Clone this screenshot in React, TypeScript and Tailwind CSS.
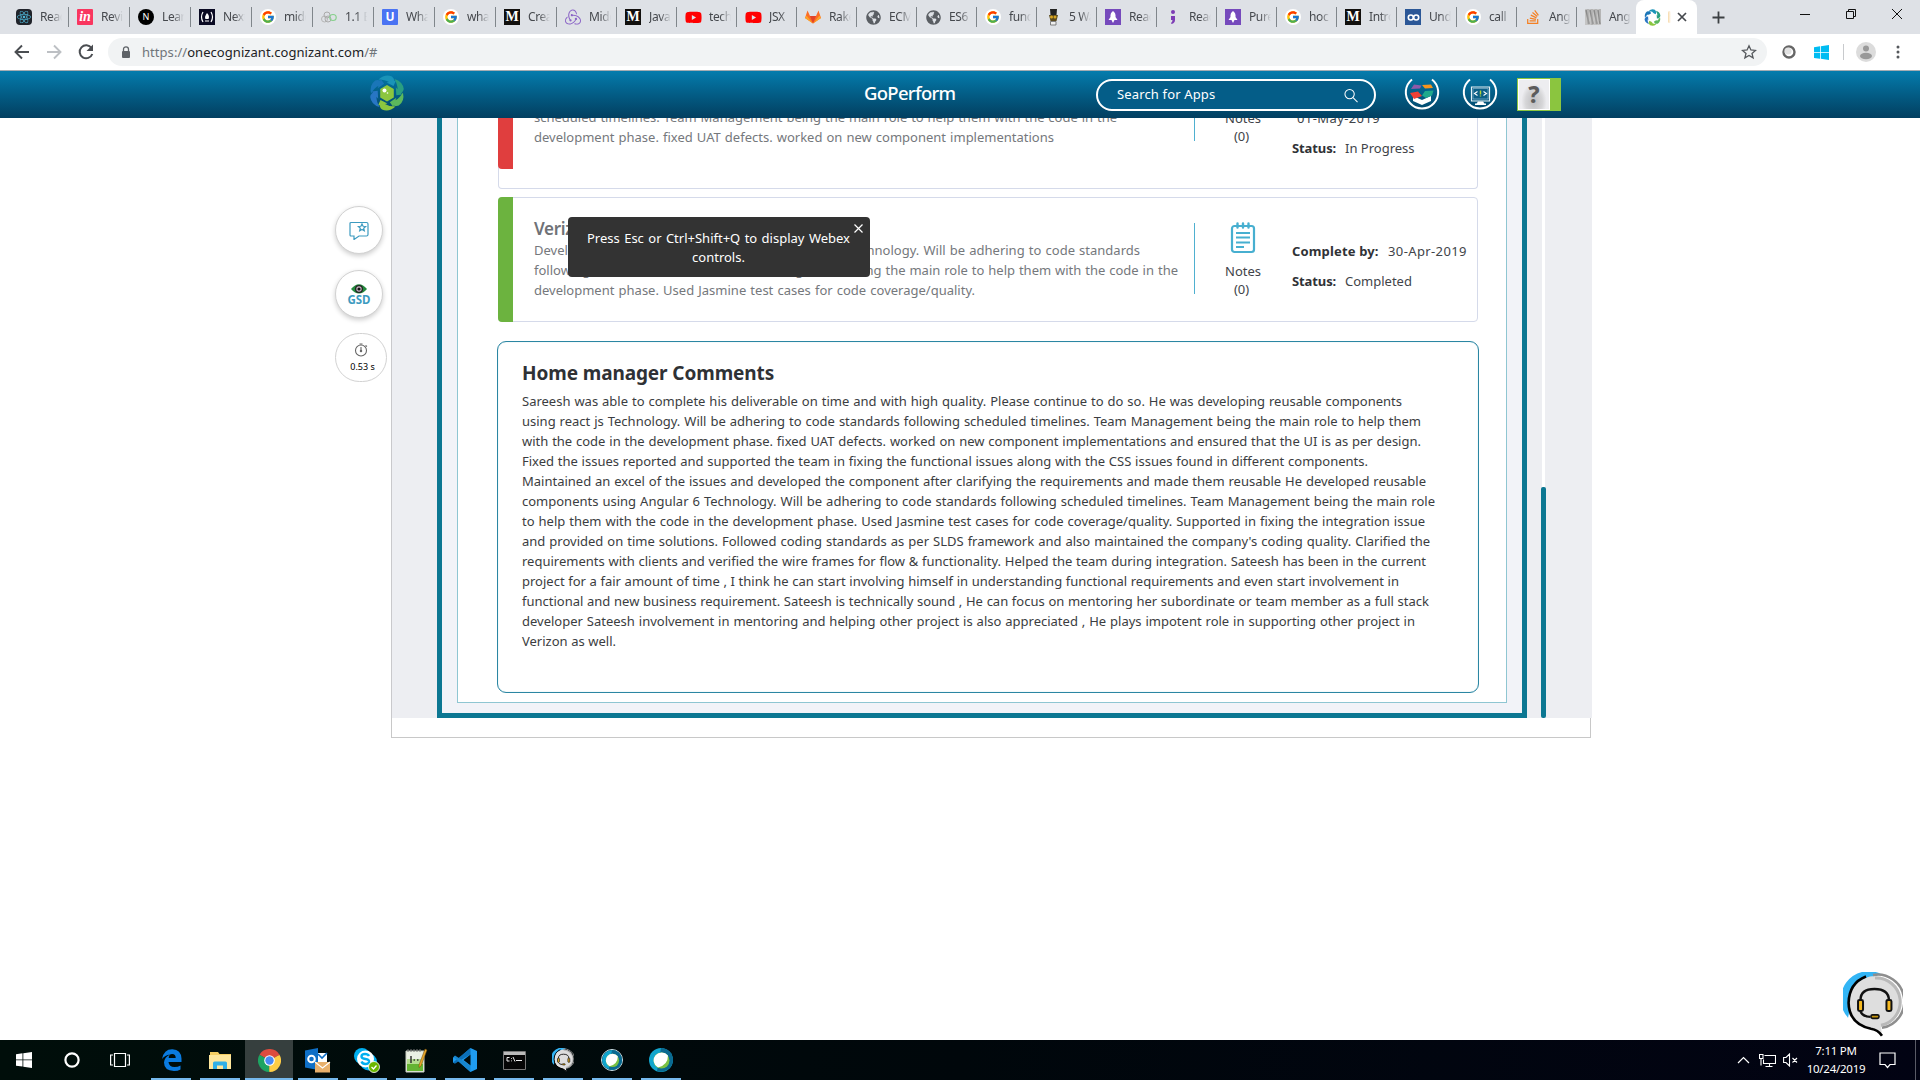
import React from "react";
import { FaReact, FaYoutube, FaStackOverflow, FaRocket, FaGlobeAmericas } from "react-icons/fa";
import { FcGoogle } from "react-icons/fc";
import { SiRedux } from "react-icons/si";

type Kind = string;

function Favicon({ kind }: { kind: Kind }) {
  switch (kind) {
    case "react":
      return (
        <span className="flex size-4 items-center justify-center rounded-sm bg-[#20232a]">
          <FaReact size={14} color="#4fb6d6" />
        </span>
      );
    case "in":
      return (
        <span className="flex size-4 items-center justify-center rounded-[1px] bg-[#f9365f] font-['Liberation_Serif'] text-[14px] leading-4 font-bold text-white italic">
          in
        </span>
      );
    case "next":
      return (
        <span className="flex size-4 items-center justify-center rounded-full bg-black text-[9px] leading-4 text-white">N</span>
      );
    case "fcc":
      return (
        <span className="flex size-4 items-center justify-center bg-[#0a0a23]">
          <svg width="14" height="12" viewBox="0 0 14 12" fill="none" stroke="#fff">
            <path d="M3 1Q0 6 3 11M11 1Q14 6 11 11M5 10h4" strokeWidth="1.2" />
            <path d="M7 2q3 3 1.500 6h-3q-1.500-2 1.500-6z" fill="#fff" stroke="none" />
          </svg>
        </span>
      );
    case "google":
      return (
        <span className="flex size-4 items-center justify-center rounded-full bg-white">
          <FcGoogle size={14} />
        </span>
      );
    case "saga":
      return (
        <svg width="16" height="12" viewBox="0 0 16 12" fill="none">
          <circle cx="6" cy="4" r="3" stroke="#aaa" />
          <circle cx="3.500" cy="8" r="3" stroke="#b5b5b5" />
          <circle cx="7" cy="8" r="3" stroke="#aaa" />
          <ellipse cx="12" cy="6.500" rx="3.200" ry="3" stroke="#86d08c" strokeWidth="1.200" />
        </svg>
      );
    case "u":
      return (
        <span className="flex size-4 items-center justify-center rounded-[1px] bg-[#4a73f3] text-[12px] leading-4 font-bold text-white">U</span>
      );
    case "m":
      return (
        <span className="flex size-4 items-center justify-center bg-[#12100e] font-['Liberation_Serif'] text-[14px] leading-4 font-bold text-white">M</span>
      );
    case "redux":
      return <SiRedux size={16} color="#8a63c6" />;
    case "youtube":
      return (
        <span className="relative flex size-4 items-center justify-center">
          <FaYoutube size={17} color="#f00" className="shrink-0" />
        </span>
      );
    case "gitlab":
      return (
        <svg width="16" height="16" viewBox="0 0 16 16">
          <path d="M8 14.500 0 9 2.500 1.500 5 7h6l2.500-5.500L16 9z" fill="#fc6d26" />
          <path d="M8 14.500 5 7h6z" fill="#e24329" />
          <path d="M0 9l1.500-2.500L8 14.500zM16 9l-1.500-2.500L8 14.500z" fill="#fca326" />
        </svg>
      );
    case "globe":
      return <FaGlobeAmericas size={15} color="#5a5e63" />;
    case "tux":
      return (
        <svg width="16" height="18" viewBox="0 0 16 18">
          <path d="M5 1h7l-.5 6h-6z" fill="#222" />
          <path d="M4 7h9l-1.500 6h-6z" fill="#5b4a1d" />
          <circle cx="6.500" cy="9" r="1.500" fill="#d9a520" />
          <circle cx="10" cy="9" r="1.500" fill="#d9a520" />
          <path d="M5.500 13.500h5.500v3.500h-5.500z" fill="#eee" stroke="#666" strokeWidth=".8" />
        </svg>
      );
    case "rocket":
      return (
        <span className="flex size-4 items-center justify-center bg-[#764abc]">
          <svg width="10" height="12" viewBox="0 0 10 12" fill="#fff">
            <path d="M5 0q3 2 2.500 6L9.500 9H6.500L5 12 3.500 9H.500l2-3Q2 2 5 0z" />
          </svg>
        </span>
      );
    case "semi":
      return (
        <svg width="16" height="16" viewBox="0 0 16 16" fill="#7d3cb5">
          <circle cx="8" cy="3" r="2" />
          <path d="M6 7h4v4q0 3-3.500 4l-.5-1q1.500-1 1.500-3H6z" />
        </svg>
      );
    case "oo":
      return (
        <span className="flex size-4 items-center justify-center bg-[#2b5797]">
          <svg width="13" height="7" viewBox="0 0 13 7" fill="none" stroke="#fff" strokeWidth="1.600">
            <circle cx="3.800" cy="3.500" r="2.500" />
            <circle cx="9.200" cy="3.500" r="2.500" />
          </svg>
        </span>
      );
    case "so":
      return <FaStackOverflow size={16} color="#f48024" />;
    case "wave":
      return (
        <svg width="16" height="16" viewBox="0 0 16 16" fill="none">
          <path d="M0 0h16v16H0z" fill="#c4c4c4" />
          <path d="M1 1l3 14M5 1l3 14M9 1l3 14M13 1l2 14" stroke="#8a8a8a" strokeWidth="1.500" />
          <path d="M3 0v15M7 0v16M11 0v15M15 0v12" stroke="#a5a5a5" />
        </svg>
      );
    default:
      return <FaRocket size={12} />;
  }
}

const tabs: [Kind, string][] = [
  ["react", "React"],
  ["in", "Revie"],
  ["next", "Learn"],
  ["fcc", "Next"],
  ["google", "midd"],
  ["saga", "1.1 B"],
  ["u", "What"],
  ["google", "what"],
  ["m", "Creat"],
  ["redux", "Midd"],
  ["m", "Java"],
  ["youtube", "tech"],
  ["youtube", "JSX"],
  ["gitlab", "Rake"],
  ["globe", "ECM"],
  ["globe", "ES6"],
  ["google", "func"],
  ["tux", "5 Wa"],
  ["rocket", "Reac"],
  ["semi", "Reac"],
  ["rocket", "Pure"],
  ["google", "hoc"],
  ["m", "Intro"],
  ["oo", "Undo"],
  ["google", "call"],
  ["so", "Angu"],
  ["wave", "Angu"],
];

function CognizantMark({ size, inner }: { size: number; inner?: boolean }) {
  const colors = ["#1a94b8", "#2a9f80", "#5cb85c", "#8cc63f", "#2876c4", "#1a76b8"];
  return (
    <svg width={size} height={size} viewBox="0 0 36 36">
      {colors.map((c, i) => (
        <g key={c} transform={`rotate(${i * 60} 18 18)`}>
          <path d="M9.500 4.500Q16-1.500 23 1.500 25 3 25.500 6L27 5.500 24.500 11 17.500 7.500 20 7Q16 4.500 9.500 4.500z" fill={c} />
        </g>
      ))}
      {inner && <path d="M18 10l6.800 4v8.500l-6.800 4-6.800-4V14z" fill="#8cc63f" />}
      {inner && <circle cx="15.500" cy="15.500" r="2" fill="#fff" />}
      {inner && <circle cx="18.500" cy="18" r=".8" fill="#fff" />}
    </svg>
  );
}

function TabStrip() {
  return (
    <div className="flex h-[34px] shrink-0 bg-[#dee1e6] pl-2">
      {tabs.map(([kind, label], i) => (
        <div
          key={i}
          className={`relative flex h-[34px] shrink-0 items-center pl-2 ${i < 9 ? "w-[61px]" : i === 26 ? "w-[59px]" : "w-[60px]"}`}
        >
          <span className="flex size-4 shrink-0 items-center justify-center">
            <Favicon kind={kind} />
          </span>
          <span className="ml-2 w-[22px] overflow-hidden [mask-image:linear-gradient(to_right,black_50%,transparent)] text-[12px] leading-4 tracking-[-0.4px] whitespace-nowrap text-[#45484d]">
            {label}
          </span>
          {i < 26 && <span className="absolute top-[7px] right-0 h-5 w-px bg-[#80868b]" />}
        </div>
      ))}
      <div className="flex h-[34px] w-[61px] shrink-0 items-center rounded-t-lg bg-white pl-2">
        <CognizantMark size={17} />
        <span className="ml-[7px] h-3 w-[3px] rounded-full bg-gradient-to-r from-[#f7d9a8] to-white" />
        <svg className="ml-[6px]" width="10" height="10" viewBox="0 0 10 10" stroke="#45484d" strokeWidth="1.700">
          <path d="M1 1l8 8M9 1l-8 8" />
        </svg>
      </div>
      <svg className="mt-[11px] ml-[15px]" width="13" height="13" viewBox="0 0 13 13" stroke="#3c4043" strokeWidth="1.800">
        <path d="M6.500 .500v12M.500 6.500h12" />
      </svg>
      <div className="mt-[8px] ml-[74px] flex gap-[34px]">
        <svg width="12" height="12" viewBox="0 0 12 12" stroke="#111">
          <path d="M1 6.500h10" />
        </svg>
        <svg width="12" height="12" viewBox="0 0 12 12" stroke="#111" fill="none">
          <path d="M1.500 3.500h7v7h-7zM3.500 3.500v-2h7v7h-2" />
        </svg>
        <svg width="12" height="12" viewBox="0 0 12 12" stroke="#111" fill="none">
          <path d="M1 1l10 10M11 1l-10 10" />
        </svg>
      </div>
    </div>
  );
}

function Toolbar() {
  return (
    <div className="flex h-9 shrink-0 items-center bg-white">
      <svg className="ml-[13px]" width="18" height="18" viewBox="0 0 18 18" fill="none" stroke="#4a4d51" strokeWidth="1.900">
        <path d="M16 9H3M9 2.500L2.500 9 9 15.500" />
      </svg>
      <svg className="ml-[14px]" width="18" height="18" viewBox="0 0 18 18" fill="none" stroke="#bdc0c4" strokeWidth="1.900">
        <path d="M2 9h13M9 2.500L15.500 9 9 15.500" />
      </svg>
      <svg className="ml-[14px]" width="18" height="18" viewBox="0 0 18 18" fill="none" stroke="#4a4d51" strokeWidth="2">
        <path d="M14.500 5A6.500 6.500 0 1 0 15.300 11" />
        <path d="M16 1.500v6.500h-6.500z" fill="#4a4d51" stroke="none" />
      </svg>
      <div className="ml-[13px] flex h-7 w-[1659px] items-center rounded-full bg-[#f1f3f4] pr-[10px] pl-[13px]">
        <svg width="10" height="13" viewBox="0 0 10 13" fill="none">
          <rect x="1" y="5" width="8" height="7" rx="1" fill="#5f6368" />
          <path d="M2.500 5.500V3.300a2.500 2.500 0 0 1 5 0v2.200" stroke="#5f6368" strokeWidth="1.300" />
        </svg>
        <div className="ml-[11px] flex-1 text-[13px] leading-5 tracking-[0.05px] text-[#202124]">
          <span className="text-[#70757a]">https://</span>onecognizant.cognizant.com<span className="text-[#70757a]">/#</span>
        </div>
        <svg width="16" height="16" viewBox="0 0 16 16" fill="none" stroke="#55585c" strokeWidth="1.300">
          <path d="M8 1.800l1.900 4.200 4.600.4-3.500 3 1.100 4.500L8 11.500l-4.100 2.400L5 9.400l-3.500-3 4.600-.4z" />
        </svg>
      </div>
      <svg className="ml-[15px]" width="14" height="14" viewBox="0 0 14 14" fill="none">
        <circle cx="7" cy="7" r="5.500" stroke="#666" strokeWidth="2.400" />
        <circle cx="6" cy="6" r="3.600" fill="#e2e2e2" />
      </svg>
      <svg className="ml-[18px]" width="15" height="15" viewBox="0 0 15 15" fill="#00bcf2">
        <path d="M0 2.200l6-.9v5.900H0zM6.800 1.200L15 0v7.200H6.800zM0 8h6v5.800l-6-.9zM6.800 8H15v7l-8.200-1.200z" />
      </svg>
      <span className="ml-[14px] h-4 w-px bg-[#c8cacd]" />
      <svg className="ml-3" width="20" height="20" viewBox="0 0 20 20">
        <circle cx="10" cy="10" r="10" fill="#dcdcdc" />
        <circle cx="10" cy="6.500" r="3" fill="#999" />
        <ellipse cx="10" cy="14" rx="6" ry="3.200" fill="#999" />
      </svg>
      <svg className="ml-5" width="4" height="14" viewBox="0 0 4 14" fill="#55585c">
        <circle cx="2" cy="2" r="1.500" />
        <circle cx="2" cy="7" r="1.500" />
        <circle cx="2" cy="12" r="1.500" />
      </svg>
    </div>
  );
}

function SiteHeader() {
  return (
    <header className="flex h-12 shrink-0 border-t border-[#a5adb3] bg-gradient-to-b from-[#047cad] to-[#023f60]">
      <div className="mt-[4px] ml-[369px] h-9 w-[36px]">
        <CognizantMark size={36} inner />
      </div>
      <div className="mt-[7px] ml-[459px] w-[92px] text-[18.500px] leading-[30px] font-medium tracking-[-0.7px] whitespace-nowrap text-white">GoPerform</div>
      <div className="mt-2 ml-[140px] flex h-8 w-[280px] items-center rounded-full border-2 border-white bg-[#045d88] pr-[16px] pl-[19px]">
        <span className="flex-1 text-[13px] tracking-[0.15px] whitespace-nowrap text-white">Search for Apps</span>
        <svg width="14" height="15" viewBox="0 0 15 15" fill="none" stroke="#fff" strokeWidth="1.100">
          <circle cx="6" cy="6" r="5" />
          <path d="M9.700 9.700l4.800 4.800" />
        </svg>
      </div>
      <svg className="mt-[6px] ml-[28px]" width="36" height="35" viewBox="0 0 36 35" fill="none">
        <path d="M8 2.500A16.200 16.200 0 1 0 28 2.500" stroke="#fff" strokeWidth="2" />
        <path d="M9 19l9 4 9-4v5l-9 4-9-4z" fill="#fff" />
        <path d="M7 12l3-4.500 7.500 1-1.500 3z" fill="#8e5aa8" />
        <path d="M18 8l9-.500 2 3.500-8 .500z" fill="#f7941d" />
        <path d="M6 16l8-1.500 4 4.500-8 3z" fill="#ef4136" />
        <path d="M18 18.500l3-4.500 8.500-.5-1.500 5-6 2.500z" fill="#1fa98c" />
      </svg>
      <svg className="mt-[6px] ml-[22px]" width="36" height="35" viewBox="0 0 36 35" fill="none">
        <path d="M8 2.500A16.200 16.200 0 1 0 28 2.500" stroke="#fff" strokeWidth="2" />
        <path d="M9.500 10h18v14h-18z" stroke="#e6f1f6" strokeWidth="1.200" fill="#0b5f87" />
        <path d="M11 11.500h15v10.500H11z" stroke="#9cc5d8" strokeWidth=".6" />
        <path d="M15.500 14.500l-3 2 3 2M21.500 14.500l3 2-3 2" stroke="#fff" strokeWidth="1.100" />
        <path d="M18.500 13.500v4M18.500 18.500v1" stroke="#b8d432" strokeWidth="1.400" />
        <path d="M16 24.500h5l1.500 2h1.500v1.500H13v-1.500h1.500z" fill="#fff" />
      </svg>
      <div className="mt-[7px] ml-[19px] flex h-[33px] w-11 bg-[#8bc53f] p-px">
        <div className="flex h-[31px] w-8 items-center justify-center border border-white bg-[radial-gradient(ellipse_at_50%_75%,#bdbdbf_0%,#d6d6d8_40%,#ededf0_60%)] text-[23px] font-extrabold text-[#5c5c5c]">
          ?
        </div>
      </div>
    </header>
  );
}

const line = "block h-5 leading-5 whitespace-nowrap text-justify [text-align-last:justify]";

function NotesIcon() {
  return (
    <svg width="26" height="32" viewBox="0 0 26 32" fill="none" stroke="#47afd0">
      <rect x="2" y="4" width="22" height="26" rx="2.500" strokeWidth="2.200" />
      <path d="M7.500 1.500v4M13 1.500v4M18.500 1.500v4" strokeWidth="2.400" strokeLinecap="round" />
      <path d="M6 11h14M6 15.500h14M6 20.500h14M6 25h8" strokeWidth="2.200" />
    </svg>
  );
}

function GoalCard({
  first,
  title,
  lines,
  date,
  status,
}: {
  first?: boolean;
  title?: string;
  lines: [string, string][];
  date: string;
  status: string;
}) {
  return (
    <div
      className={`flex w-[980px] shrink-0 border border-[#d5daea] ${first ? "h-[71px] rounded-b-[4px] border-t-0" : "mt-2 h-[125px] rounded-[4px]"}`}
    >
      <div
        className={`-ml-px w-[15px] shrink-0 ${first ? "h-[51px] rounded-bl-[4px] bg-[#e03e3e]" : "-mt-px h-[125px] rounded-l-[4px] bg-[#6cb33f]"}`}
      />
      <div className="ml-[21px] w-[660px] shrink-0 text-[13px] text-[#75787c]">
        {title && <div className="mt-[20px] h-[22px] text-[17px] leading-[22px] font-semibold tracking-[-0.3px] text-[#6f7277]">{title}</div>}
        <div className={first ? "-mt-[11px]" : "mt-0"}>
          {lines.map(([text, w]) => (
            <span key={text} className={`${line} ${w}`}>
              {text}
            </span>
          ))}
        </div>
      </div>
      <div className={`w-px shrink-0 bg-[#4fb0d0] ${first ? "mt-0 h-[23px]" : "mt-[25px] h-[71px]"}`} />
      <div className="ml-[21px] flex w-[54px] shrink-0 flex-col items-center text-[13px] text-[#414449]">
        {first ? (
          <div className="-mt-[9px]" />
        ) : (
          <div className="mt-[24px] mb-[8px] h-8">
            <NotesIcon />
          </div>
        )}
        <div className="h-[18px] leading-[18px]">Notes</div>
        <div className="mr-[3px] h-[18px] leading-[18px]">(0)</div>
      </div>
      <div className="ml-[22px] w-[180px] shrink-0 text-[13px] whitespace-nowrap text-[#414449]">
        {first ? (
          <div className="-mt-[10px] ml-[5px] h-5 leading-5 tracking-[0.4px]">{date}</div>
        ) : (
          <div className="mt-[43px] flex h-5 leading-5 tracking-[0.38px]">
            <b className="w-[96px] tracking-[0.15px] text-[#303236]">Complete by:</b>
            {date}
          </div>
        )}
        <div className="mt-[10px] flex h-5 leading-5">
          <b className="w-[53px] tracking-[-0.1px] text-[#303236]">Status:</b>
          {status}
        </div>
      </div>
    </div>
  );
}

const comments: [string, string][] = [
  ["Sareesh was able to complete his deliverable on time and with high quality. Please continue to do so. He was developing reusable components", "w-[880px]"],
  ["using react js Technology. Will be adhering to code standards following scheduled timelines. Team Management being the main role to help them", "w-[899px]"],
  ["with the code in the development phase. fixed UAT defects. worked on new component implementations and ensured that the UI is as per design.", "w-[899px]"],
  ["Fixed the issues reported and supported the team in fixing the functional issues along with the CSS issues found in different components.", "w-[846px]"],
  ["Maintained an excel of the issues and developed the component after clarifying the requirements and made them reusable He developed reusable", "w-[904px]"],
  ["components using Angular 6 Technology. Will be adhering to code standards following scheduled timelines. Team Management being the main role", "w-[913px]"],
  ["to help them with the code in the development phase. Used Jasmine test cases for code coverage/quality. Supported in fixing the integration issue", "w-[903px]"],
  ["and provided on time solutions. Followed coding standards as per SLDS framework and also maintained the company's coding quality. Clarified the", "w-[908px]"],
  ["requirements with clients and verified the wire frames for flow & functionality. Helped the team during integration. Sateesh has been in the current", "w-[904px]"],
  ["project for a fair amount of time , I think he can start involving himself in understanding functional requirements and even start involvement in", "w-[877px]"],
  ["functional and new business requirement. Sateesh is technically sound , He can focus on mentoring her subordinate or team member as a full stack", "w-[907px]"],
  ["developer Sateesh involvement in mentoring and helping other project is also appreciated , He plays impotent role in supporting other project in", "w-[893px]"],
  ["Verizon as well.", "w-[94px]"],
];

function Content() {
  return (
    <div className="ml-[391px] w-[1201px]">
      <div className="flex h-[600px] border-l border-[#c9c9cc] bg-[#edeef2]">
        <div className="ml-[45px] h-[600px] w-[1090px] border-x-[5px] border-b-[5px] border-[#0c7792] bg-[#f2f3f8] px-[15px] pb-[10px]">
          <div className="flex h-[585px] flex-col border-x border-b border-[#8fc6d2] bg-white pl-[40px]">
            <GoalCard
              first
              lines={[
                ["scheduled timelines. Team Management being the main role to help them with the code in the", "w-[583px]"],
                ["development phase. fixed UAT defects. worked on new component implementations", "w-[520px]"],
              ]}
              date="01-May-2019"
              status="In Progress"
            />
            <GoalCard
              title="Verizon"
              lines={[
                ["Developing reusable components using Angular 6 Technology. Will be adhering to code standards", "w-[606px]"],
                ["following scheduled timelines. Team Management being the main role to help them with the code in the", "w-[644px]"],
                ["development phase. Used Jasmine test cases for code coverage/quality.", "w-[441px]"],
              ]}
              date="30-Apr-2019"
              status="Completed"
            />
            <div className="mt-[19px] -ml-px h-[352px] w-[982px] shrink-0 rounded-[9px] border-[1.500px] border-[#2b86a3] pt-[17px] pl-[24px] text-[#3b3d41] shadow-[inset_0_0_1px_#8fc6d2]">
              <h2 className="h-[32px] w-[252px] text-[19px] leading-[28px] font-bold tracking-[-0.1px] whitespace-nowrap text-[#2f3135]">
                Home manager Comments
              </h2>
              <div className="text-[13px]">
                {comments.map(([text, w]) => (
                  <span key={text} className={`${line} ${w}`}>
                    {text}
                  </span>
                ))}
              </div>
            </div>
          </div>
        </div>
        <div className="ml-[14px] flex h-[600px] w-[5px] flex-col items-center">
          <div className="h-[369px] w-[3px] bg-white" />
          <div className="h-[231px] w-[5px] rounded-[2px] bg-[#0c7792]" />
        </div>
      </div>
      <div className="h-5 w-[1200px] border-x border-b border-[#c8c8c8]" />
    </div>
  );
}

function SideWidgets() {
  const round = "flex flex-col items-center justify-center rounded-full border border-[#d2d2d2] bg-white";
  return (
    <div className="absolute top-[206px] left-[335px] flex w-[52px] flex-col">
      <div className={`${round} size-12 shadow-[0_2px_5px_rgba(0,0,0,0.2)]`}>
        <svg width="20" height="19" viewBox="0 0 20 19" fill="none" stroke="#3d9bc0" strokeWidth="1.200">
          <path d="M2 1.500h15.500a1.500 1.500 0 0 1 1.500 1.500v10.500a1.500 1.500 0 0 1-1.500 1.500H10l-5 3.500V15H2a1 1 0 0 1-1-1V2.500a1 1 0 0 1 1-1z" />
          <path d="M13 3l1.100 2.300 2.500.2-1.900 1.700.6 2.500L13 8.400l-2.300 1.300.6-2.500-1.900-1.700 2.500-.2z" />
        </svg>
      </div>
      <div className={`${round} mt-4 size-12 shadow-[0_2px_5px_rgba(0,0,0,0.2)]`}>
        <svg width="16" height="10" viewBox="0 0 16 10">
          <path d="M0 5Q8-4.500 16 5 8 14 0 5z" fill="#238a3d" />
          <circle cx="8" cy="5" r="4" fill="#222" />
          <circle cx="8" cy="5" r="2.700" fill="#c9b7c4" />
          <circle cx="8" cy="5" r="1.600" fill="#111" />
        </svg>
        <span className="mt-px text-[11.500px] leading-[10px] font-bold text-[#3d9bc0]">GSD</span>
      </div>
      <div className={`${round} mt-[15px] h-[49px] w-[52px]`}>
        <svg width="14" height="14" viewBox="0 0 14 14" fill="none" stroke="#666" strokeWidth="1.100">
          <circle cx="7" cy="7.500" r="5.500" />
          <path d="M7 4v4M5.500 1h3M11.500 2.500l1.500 1" />
          <circle cx="7" cy="8" r=".7" fill="#555" />
        </svg>
        <span className="mt-[4px] ml-[3px] text-[9px] leading-[12px] text-black">0.53 s</span>
      </div>
    </div>
  );
}

function Toast() {
  return (
    <div className="absolute top-[217px] left-[568px] h-[60px] w-[302px] rounded-[4px] bg-[#333] pt-[12px] pl-[19px] text-[13px] text-white">
      <div className="block h-[19px] w-[263px] text-justify leading-[19px] whitespace-nowrap [text-align-last:justify]">
        Press Esc or Ctrl+Shift+Q to display Webex
      </div>
      <div className="w-[263px] text-center leading-[19px]">controls.</div>
      <svg className="absolute top-[7px] right-[7px]" width="9" height="9" viewBox="0 0 9 9" stroke="#fff" strokeWidth="1.200">
        <path d="M.500 .500l8 8M8.500 .500l-8 8" />
      </svg>
    </div>
  );
}

function Headset({ size }: { size: number }) {
  return (
    <svg width={size} height={size * 1.08} viewBox="0 0 60 65" fill="none">
      <path d="M5 46A28 28 0 0 1 38 2L24 8 8 30z" fill="#33b5f5" />
      <circle cx="32" cy="30" r="26" fill="#dedede" />
      <path d="M28 55l11 9-1-10z" fill="#dedede" />
      <path d="M30 3A26.500 26.500 0 0 1 39 56" stroke="#8e8e8e" strokeWidth="2.500" />
      <path d="M32 6A24 24 0 0 1 38 53.500" stroke="#b9b9b9" strokeWidth="3" />
      <path d="M39 64Q35 58 28 57 6 52 5.500 31 6 11 23 4.500" stroke="#000" strokeWidth="2.600" />
      <path d="M17.500 28Q17.500 17 31.500 17t14.500 11M17.500 40q3 5 10 5" stroke="#111" strokeWidth="2.400" />
      <rect x="15" y="28" width="5" height="11" rx="1.500" fill="#f5b921" stroke="#111" strokeWidth="2" />
      <rect x="43.500" y="28" width="5" height="11" rx="1.500" fill="#f5b921" stroke="#111" strokeWidth="2" />
      <rect x="28" y="43" width="8" height="3.500" rx="1.500" fill="#c4940f" stroke="#111" strokeWidth="1.600" />
    </svg>
  );
}

function ChromeIcon() {
  return (
    <svg width="23" height="23" viewBox="0 0 24 24">
      <path d="M12 12L1.600 6A12 12 0 0 1 22.400 6z" fill="#dd4b3e" />
      <path d="M12 12L1.600 6A12 12 0 0 0 12 24z" fill="#1da462" />
      <path d="M12 12L22.400 6A12 12 0 0 1 12 24z" fill="#ffcd46" />
      <path d="M1.600 6h20.800l.3.600H12z" fill="#dd4b3e" />
      <path d="M12 24l5-9-5-3z" fill="#ffcd46" />
      <circle cx="12" cy="12" r="5.500" fill="#fff" />
      <circle cx="12" cy="12" r="4.400" fill="#4a8af4" />
    </svg>
  );
}

function WebexBall({ size }: { size: number }) {
  return (
    <svg width={size} height={size} viewBox="0 0 24 24">
      <circle cx="12" cy="12" r="12" fill="#12a5cd" />
      <path d="M12 0a12 12 0 0 1 12 12 12 12 0 0 1-16 11z" fill="#0a6a91" />
      <circle cx="12.500" cy="12.500" r="8" fill="#7ac143" />
      <path d="M19 7.500A8 8 0 1 0 9 19.500Q19 17 19 7.500z" fill="#fff" />
    </svg>
  );
}

const apps: { w: string; node: React.ReactNode; active?: boolean }[] = [
  {
    w: "w-10",
    node: (
      <svg width="21" height="22" viewBox="0 0 21 22" fill="#0a7be0">
        <path d="M1 10Q3 0 11.500.300 20 .800 20.500 9.500V13H7.500q.500 5 6 5 3.500 0 6-1.500v4Q17 22 13 22 3 21.500 3 13.500 3.500 8 9 5.500 4 6 1 10zM7.700 9h7q0-4-3.500-4T7.700 9z" />
      </svg>
    ),
  },
  {
    w: "w-10",
    node: (
      <svg width="22" height="19" viewBox="0 0 22 19">
        <path d="M1 1h8l1.500 2H22v15H1z" fill="#f5ce62" />
        <path d="M0 4h22v14H0z" fill="#ffe79c" />
        <path d="M4 18v-6q0-1.500 1.500-1.500h11Q18 10.500 18 12v6h-4v-3.500H8V18z" fill="#31b0e6" />
      </svg>
    ),
  },
  { w: "w-12", active: true, node: <ChromeIcon /> },
  {
    w: "w-10",
    node: (
      <svg width="26" height="25" viewBox="0 0 26 25">
        <path d="M0 2.500L13 0v22L0 19.500z" fill="#0f6fc6" />
        <circle cx="6.500" cy="11" r="3.300" fill="none" stroke="#fff" strokeWidth="2" />
        <path d="M13 5h9v10h-9z" fill="#fff" />
        <path d="M13 6l4 4 5-5" fill="none" stroke="#0f6fc6" strokeWidth="1.600" />
        <path d="M10 14h15v10.500H10z" fill="#e8b06c" />
        <path d="M10 14l7.500 6L25 14" fill="none" stroke="#fff" strokeWidth="1.100" />
      </svg>
    ),
  },
  {
    w: "w-10",
    node: (
      <svg width="26" height="25" viewBox="0 0 26 25">
        <circle cx="8" cy="8" r="8" fill="#00aff0" />
        <circle cx="14.500" cy="14" r="8.500" fill="#00aff0" />
        <circle cx="11.500" cy="11" r="8.500" fill="#fff" />
        <path d="M15 8q-1-2-4-2-3.500 0-3.500 2.500 0 2 4 2.500t3.500 3q-.5 2-3.500 2-3 0-4-2.500" fill="none" stroke="#00aff0" strokeWidth="2.400" />
        <circle cx="20" cy="19" r="5.500" fill="#6bb700" stroke="#fff" strokeWidth=".8" />
        <path d="M17.500 19l2 2 3-3.500" fill="none" stroke="#fff" strokeWidth="1.300" />
      </svg>
    ),
  },
  {
    w: "w-10",
    node: (
      <svg width="23" height="25" viewBox="0 0 23 25">
        <path d="M1 3h18v21H1z" fill="#e9efe3" stroke="#c9cfc2" />
        <path d="M2 15h16v8H2z" fill="#64b432" />
        <path d="M2 11h16v5H2z" fill="#b5dd8f" />
        <path d="M6 8v7M8.500 12h1.500M12 12h1.500" stroke="#333" strokeWidth="1.500" />
        <path d="M20 1l2 1-6 16-2 1.500V17z" fill="#e7a72c" stroke="#6f4a0d" strokeWidth=".5" />
        <path d="M3 1v3M6 1v3M9 1v3M12 1v3M15 1v3" stroke="#777" />
      </svg>
    ),
  },
  {
    w: "w-10",
    node: (
      <svg width="24" height="24" viewBox="0 0 24 24">
        <path d="M17.500 0L24 3v18l-6.500 3L5 13l-3 2.500L0 14.500V9.500l2-1L5 11zM17.500 6.500L10.500 12l7 5.500z" fill="#1f9cf0" fillRule="evenodd" />
        <path d="M17.500 0L0 14.500l2 1L17.500 6.500z" fill="#0b6fb8" />
        <path d="M17.500 17.500L2 7.500.500 9 17.500 24z" fill="#1787d0" />
      </svg>
    ),
  },
  {
    w: "w-10",
    node: (
      <svg width="23" height="19" viewBox="0 0 23 19">
        <path d="M.500.500h22v18H.500z" fill="#050505" stroke="#777" />
        <path d="M1 1h21v3H1z" fill="#bbb" />
        <path d="M6.500 6.500H4v3.500h2.500M8.500 7v.800M8.500 9.500v.800M10 6l2 4.500M13 9.500h6" stroke="#eee" fill="none" />
      </svg>
    ),
  },
  { w: "w-10", node: <Headset size={22} /> },
  {
    w: "w-10",
    node: (
      <span className="flex rounded-full border border-[#cfe3ea]">
        <WebexBall size={20} />
      </span>
    ),
  },
  { w: "w-10", node: <WebexBall size={24} /> },
];

function Taskbar() {
  return (
    <footer className="flex h-10 shrink-0 bg-gradient-to-r from-[#000e0a] via-[#00070b] to-[#020313] text-white">
      <svg className="mt-3 ml-4" width="16" height="16" viewBox="0 0 16 16" fill="#fff">
        <path d="M0 2.200l6.500-.9v6.200H0zM7.300 1.200L16 0v7.500H7.300zM0 8.300h6.500v6.300L0 13.700zM7.300 8.300H16V16l-8.700-1.200z" />
      </svg>
      <svg className="mt-3 ml-8" width="16" height="16" viewBox="0 0 16 16" fill="none" stroke="#fff" strokeWidth="2.200">
        <circle cx="8" cy="8" r="6.600" />
      </svg>
      <svg className="mt-3 ml-[30px]" width="20" height="16" viewBox="0 0 20 16" fill="none" stroke="#fff" strokeWidth="1.200">
        <path d="M4.500 1.500h11v13h-11zM3 3H.600v10H3M17 3h2.400v10H17" />
      </svg>
      <div className="ml-[21px] flex gap-[9px]">
        {apps.map((a, i) => (
          <div key={i} className={`flex h-10 flex-col ${a.w} ${a.active ? "-mr-1 -ml-1 bg-[#363f3e]" : ""}`}>
            <div className="flex h-[38px] items-center justify-center pt-0.5">{a.node}</div>
            <div className="h-[2px] bg-[#76b9ed]" />
          </div>
        ))}
      </div>
      <div className="ml-auto flex">
        <svg className="mt-4" width="13" height="8" viewBox="0 0 13 8" fill="none" stroke="#fff" strokeWidth="1.200">
          <path d="M1 7l5.500-5.500L12 7" />
        </svg>
        <svg className="mt-[13px] ml-[9px]" width="17" height="15" viewBox="0 0 17 15" fill="none" stroke="#fff" strokeWidth="1.100">
          <path d="M5.500 2.500h11v8h-12v-4M.500 1.500h3.500v4H.500zM2 5.500v7M10.500 10.500v3M6.500 13.500h7" />
        </svg>
        <svg className="mt-[13px] ml-[7px]" width="15" height="14" viewBox="0 0 15 14" fill="none" stroke="#fff" strokeWidth="1.100">
          <path d="M.600 4.500H3l3.500-3.500v12L3 9.500H.600zM9.500 5l4.500 4.500M14 5L9.500 9.500" />
        </svg>
        <div className="ml-2 w-[60px] pt-[2px] text-center text-[11.500px] leading-[18px] tracking-[-0.25px] whitespace-nowrap">
          <div>7:11 PM</div>
          <div>10/24/2019</div>
        </div>
        <svg className="mt-3 ml-[13px]" width="17" height="17" viewBox="0 0 17 17" fill="none" stroke="#fff" strokeWidth="1.200">
          <path d="M1 1h15v11.500h-5L8.500 15.500 6 12.500H1z" />
        </svg>
        <span className="mr-1 ml-[19px] h-10 w-px bg-[#5a5b66]" />
      </div>
    </footer>
  );
}

export default function App() {
  return (
    <div className="relative flex h-[1080px] w-[1920px] flex-col overflow-hidden bg-white font-['Noto_Sans',sans-serif]">
      <TabStrip />
      <Toolbar />
      <SiteHeader />
      <main className="h-[922px] shrink-0 overflow-hidden">
        <Content />
      </main>
      <Taskbar />
      <SideWidgets />
      <Toast />
      <div className="absolute top-[972px] left-[1843px]">
        <Headset size={60} />
      </div>
    </div>
  );
}
